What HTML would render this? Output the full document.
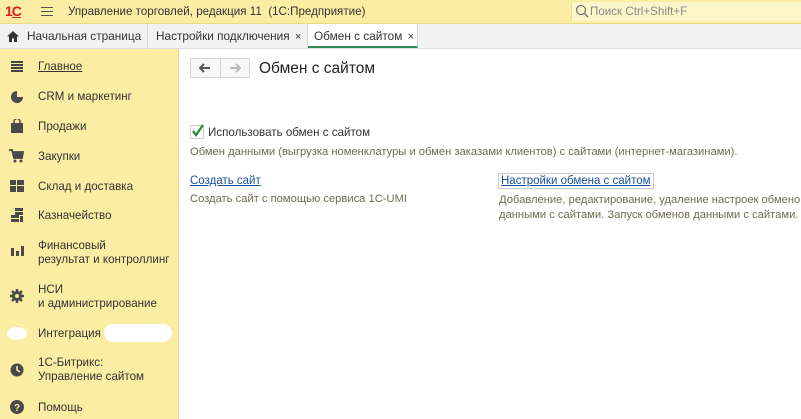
<!DOCTYPE html>
<html><head><meta charset="utf-8"><style>
*{margin:0;padding:0;box-sizing:border-box}
body{width:801px;height:419px;overflow:hidden;background:#fff;font-family:"Liberation Sans",Arial,sans-serif;color:#333;position:relative;font-size:13px}
.abs{position:absolute;white-space:nowrap}
#top{left:0;top:0;width:801px;height:24px;background:#fbeda3;border-bottom:1px solid #e8d98a}
#tabs{left:0;top:24px;width:801px;height:25px;background:#f2f2f2;border-bottom:1px solid #ddd}
#side{left:0;top:49px;width:179px;height:370px;background:#fbeda3;border-right:1px solid #e3d58c}
.tab{position:absolute;top:0;height:25px;line-height:25px;font-size:11.8px;color:#333;border-right:1px solid #d6d6d6;padding-left:8px;white-space:nowrap;overflow:hidden}
.mi{position:absolute;left:38px;font-size:11.6px;color:#333;line-height:14px;white-space:nowrap}
a{color:#1a4f9c;text-decoration:underline}
.gray{color:#6f6b55;font-size:11.2px}
</style></head><body>
<div id="top" class="abs">
 <div class="abs" style="left:5px;top:3px;font-weight:bold;color:#d42020;font-size:14px;letter-spacing:-1px">1<span style="text-decoration:underline">С</span></div>
 <div class="abs" style="left:41px;top:7px;width:12px;height:1px;background:#555;box-shadow:0 4px 0 #555,0 8px 0 #555"></div>
 <div class="abs" style="left:68px;top:5px;font-size:11.6px;color:#333">Управление торговлей, редакция 11&nbsp;&nbsp;(1С:Предприятие)</div>
 <div class="abs" style="left:571px;top:2px;width:230px;height:19px;background:#fdf6c8;border-left:1px solid #f0e08a"></div>
 <svg class="abs" style="left:575px;top:4px" width="14" height="14"><circle cx="6" cy="6" r="4.5" fill="none" stroke="#777" stroke-width="1.3"/><line x1="9" y1="9" x2="13" y2="13" stroke="#777" stroke-width="1.5"/></svg>
 <div class="abs" style="left:590px;top:5px;font-size:11.6px;color:#888">Поиск Ctrl+Shift+F</div>
</div>
<div id="tabs" class="abs">
 <div class="tab" style="left:0;width:148px;padding-left:27px">Начальная страница</div>
 <svg class="abs" style="left:7px;top:7px" width="12" height="11"><path d="M6 0L0 5.5H2V11H5V7.5H7V11H10V5.5H12Z" fill="#333"/></svg>
 <div class="tab" style="left:148px;width:160px">Настройки подключения <span style="font-size:11px;margin-left:2px">×</span></div>
 <div class="tab" style="left:308px;width:110px;background:#fff;border-bottom:2px solid #3a8a5c;height:24px;line-height:24px;padding-left:6px">Обмен с сайтом <span style="font-size:11px;margin-left:2px">×</span></div>
</div>
<div id="side" class="abs">
 <div class="abs" style="left:11px;top:12px;width:12px;height:2px;background:#444;box-shadow:0 3px 0 #444,0 6px 0 #444,0 9px 0 #444"></div>
 <div class="mi" style="top:11px;text-decoration:underline">Главное</div>
 <svg class="abs" style="left:10px;top:41px" width="14" height="14"><circle cx="7" cy="7" r="6" fill="#4a4a4a"/><path d="M7 7V0A7 7 0 0 1 14 7Z" fill="#fbeda3"/></svg>
 <div class="mi" style="top:41px">CRM и маркетинг</div>
 <svg class="abs" style="left:10px;top:70px" width="14" height="14"><rect x="1" y="4" width="12" height="10" fill="#4a4a4a"/><path d="M4 5V2.5a3 3 0 0 1 6 0V5" fill="none" stroke="#4a4a4a" stroke-width="1.5"/></svg>
 <div class="mi" style="top:71px">Продажи</div>
 <svg class="abs" style="left:9px;top:100px" width="15" height="14"><path d="M0 1H3L5 9H13L14 3H4" fill="none" stroke="#4a4a4a" stroke-width="1.8"/><rect x="4" y="3" width="10" height="6" fill="#4a4a4a"/><circle cx="6" cy="12" r="1.5" fill="#4a4a4a"/><circle cx="12" cy="12" r="1.5" fill="#4a4a4a"/></svg>
 <div class="mi" style="top:101px">Закупки</div>
 <svg class="abs" style="left:10px;top:131px" width="14" height="12"><rect width="6" height="5" fill="#4a4a4a"/><rect x="7" width="7" height="5" fill="#4a4a4a"/><rect y="6" width="6" height="6" fill="#4a4a4a"/><rect x="7" y="6" width="7" height="6" fill="#4a4a4a"/></svg>
 <div class="mi" style="top:131px">Склад и доставка</div>
 <svg class="abs" style="left:10px;top:159px" width="14" height="14"><rect x="5" y="0" width="8" height="3" fill="#4a4a4a"/><rect x="5" y="4" width="8" height="3" fill="#4a4a4a"/><rect x="1" y="7" width="8" height="3" fill="#4a4a4a"/><rect x="1" y="11" width="8" height="3" fill="#4a4a4a"/><rect x="10" y="8" width="3" height="6" fill="#4a4a4a"/></svg>
 <div class="mi" style="top:160px">Казначейство</div>
 <svg class="abs" style="left:11px;top:197px" width="13" height="10"><rect x="0" y="2" width="3" height="8" fill="#4a4a4a"/><rect x="5" y="5" width="3" height="5" fill="#4a4a4a"/><rect x="10" y="0" width="3" height="10" fill="#4a4a4a"/></svg>
 <div class="mi" style="top:190px">Финансовый<br>результат и контроллинг</div>
 <svg class="abs" style="left:10px;top:240px" width="14" height="14"><circle cx="7" cy="7" r="5" fill="#4a4a4a"/><g stroke="#4a4a4a" stroke-width="2.5"><line x1="7" y1="0" x2="7" y2="14"/><line x1="0" y1="7" x2="14" y2="7"/><line x1="2" y1="2" x2="12" y2="12"/><line x1="12" y1="2" x2="2" y2="12"/></g><circle cx="7" cy="7" r="2" fill="#fbeda3"/></svg>
 <div class="mi" style="top:234px">НСИ<br>и администрирование</div>
 <div class="abs" style="left:7px;top:278px;width:20px;height:13px;background:#fff;border-radius:50%"></div>
 <div class="mi" style="top:278px">Интеграция</div>
 <div class="abs" style="left:104px;top:275px;width:68px;height:18px;background:#fff;border-radius:10px"></div>
 <svg class="abs" style="left:10px;top:314px" width="14" height="14"><circle cx="7" cy="7" r="6.5" fill="#4a4a4a"/><path d="M7 3V7L10 9" stroke="#fbeda3" stroke-width="1.6" fill="none"/></svg>
 <div class="mi" style="top:307px">1С-Битрикс:<br>Управление сайтом</div>
 <svg class="abs" style="left:10px;top:351px" width="14" height="14"><circle cx="7" cy="7" r="7" fill="#4a4a4a"/><text x="7" y="11" font-size="10" font-weight="bold" text-anchor="middle" fill="#fbeda3" font-family="Liberation Sans">?</text></svg>
 <div class="mi" style="top:352px">Помощь</div>
</div>
<div class="abs" style="left:190px;top:58px;width:60px;height:20px;border:1px solid #d4d4d4;border-radius:2px;background:#f7f7f7"></div>
<div class="abs" style="left:220px;top:58px;width:1px;height:20px;background:#d4d4d4"></div>
<svg class="abs" style="left:199px;top:63px" width="12" height="10"><path d="M1 5H11M5 1L1 5L5 9" stroke="#555" stroke-width="2" fill="none"/></svg>
<svg class="abs" style="left:229px;top:63px" width="12" height="10"><path d="M1 5H11M7 1L11 5L7 9" stroke="#bbb" stroke-width="2" fill="none"/></svg>
<div class="abs" style="left:259px;top:60px;font-size:15.5px;color:#222">Обмен с сайтом</div>
<div class="abs" style="left:190px;top:125px;width:14px;height:14px;border:1px solid #c8c8c8;background:#fff;border-radius:2px"></div>
<svg class="abs" style="left:190px;top:123px" width="15" height="15"><path d="M3 8L6 12L13 2" stroke="#2a8a3a" stroke-width="2.3" fill="none"/></svg>
<div class="abs" style="left:208px;top:126px;font-size:11.6px;color:#333">Использовать обмен с сайтом</div>
<div class="abs gray" style="left:190px;top:146px">Обмен данными (выгрузка номенклатуры и обмен заказами клиентов) с сайтами (интернет-магазинами).</div>
<div class="abs" style="left:190px;top:175px;font-size:11.5px"><a>Создать сайт</a></div>
<div class="abs gray" style="left:190px;top:193px">Создать сайт с помощью сервиса 1С-UMI</div>
<div class="abs" style="left:498px;top:173px;font-size:11.5px;border:1px solid #ccc;padding:1px 2px"><a>Настройки обмена с сайтом</a></div>
<div class="abs gray" style="left:499px;top:193px;line-height:15px">Добавление, редактирование, удаление настроек обменов<br>данными с сайтами. Запуск обменов данными с сайтами.</div>
</body></html>
